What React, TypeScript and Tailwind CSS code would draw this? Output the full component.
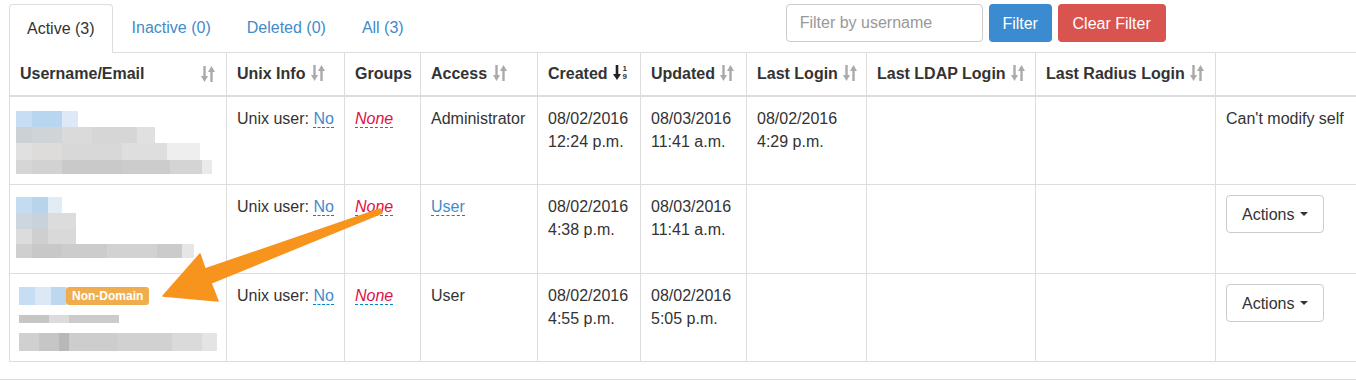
import React from "react";

type Block = { w: number; c: string };

const SortIcon = () => (
  <svg width="16" height="18" viewBox="0 0 16 18" className="inline-block align-[-3px]">
    <path d="M4.5 1v12" stroke="#aaa" strokeWidth="2.4" />
    <path d="M1 11l3.5 6 3.5-6z" fill="#aaa" />
    <path d="M11.5 17v-12" stroke="#aaa" strokeWidth="2.4" />
    <path d="M8 7l3.5-6 3.5 6z" fill="#aaa" />
  </svg>
);

const NumSortIcon = () => (
  <span className="inline-flex items-center align-[-2px] ml-1">
    <svg width="10" height="17" viewBox="0 0 10 17">
      <path d="M5 1v11" stroke="#222" strokeWidth="2.6" />
      <path d="M1 10l4 6 4-6z" fill="#222" />
    </svg>
    <span className="flex flex-col text-[8px] leading-[8px] font-bold ml-px">
      <span>1</span>
      <span>9</span>
    </span>
  </span>
);

const Mosaic = ({ rows }: { rows: { h: number; blocks: Block[] }[] }) => (
  <div className="flex flex-col blur-[0.6px]">
    {rows.map((r, i) => (
      <div key={i} className="flex" style={{ height: r.h }}>
        {r.blocks.map((b, j) => (
          <div key={j} style={{ width: b.w, backgroundColor: b.c }} />
        ))}
      </div>
    ))}
  </div>
);

const Editable = ({ children, red }: { children: React.ReactNode; red?: boolean }) => (
  <span
    className={
      red
        ? "italic text-[#dd1144] border-b border-dashed border-[#0088cc]"
        : "text-[#428bca] border-b border-dashed border-[#0088cc]"
    }
  >
    {children}
  </span>
);

const ActionsButton = () => (
  <button className="h-[38px] px-[15px] border border-[#ccc] rounded bg-white text-[#333] flex items-center gap-[6px]">
    Actions
    <span className="w-0 h-0 border-x-[4px] border-x-transparent border-t-[4px] border-t-[#333]" />
  </button>
);

const row1 = [
  { h: 16, blocks: [{ w: 16, c: "#c6def3" }, { w: 30, c: "#b9d6f0" }, { w: 16, c: "#dde9f6" }] },
  { h: 16, blocks: [{ w: 16, c: "#ccd1d5" }, { w: 30, c: "#cfd4d8" }, { w: 30, c: "#dadada" }, { w: 45, c: "#d6d6d6" }, { w: 18, c: "#e0e0e0" }] },
  { h: 17, blocks: [{ w: 16, c: "#e0e0e0" }, { w: 30, c: "#dedcda" }, { w: 60, c: "#d8d8d8" }, { w: 45, c: "#dedede" }, { w: 33, c: "#eeeeee" }] },
  { h: 14, blocks: [{ w: 16, c: "#d6d6d6" }, { w: 30, c: "#d2d2d2" }, { w: 60, c: "#c9c9c9" }, { w: 48, c: "#cccccc" }, { w: 32, c: "#d4d4d4" }, { w: 10, c: "#eaeaea" }] },
];

const row2 = [
  { h: 16, blocks: [{ w: 16, c: "#c3dcf2" }, { w: 16, c: "#b8d3ec" }, { w: 14, c: "#e2ecf6" }] },
  { h: 16, blocks: [{ w: 16, c: "#cdd6de" }, { w: 16, c: "#c9d2da" }, { w: 28, c: "#dcdcdc" }] },
  { h: 15, blocks: [{ w: 16, c: "#dcdcdc" }, { w: 16, c: "#cfcfcf" }, { w: 28, c: "#d9d9d9" }] },
  { h: 14, blocks: [{ w: 16, c: "#cfcfcf" }, { w: 30, c: "#c8c8c8" }, { w: 45, c: "#cccccc" }, { w: 50, c: "#d2d2d2" }, { w: 25, c: "#cbcbcb" }, { w: 12, c: "#e6e6e6" }] },
];

const row3b = [
  { h: 8, blocks: [{ w: 30, c: "#c6c6c6" }, { w: 20, c: "#dcdcdc" }, { w: 50, c: "#cbcbcb" }] },
];
const row3c = [
  { h: 18, blocks: [{ w: 20, c: "#d0d0d0" }, { w: 20, c: "#c6c6c6" }, { w: 10, c: "#b8b8b8" }, { w: 50, c: "#cdcdcd" }, { w: 55, c: "#d1d1d1" }, { w: 30, c: "#dadada" }, { w: 15, c: "#e4e4e4" }] },
];

const th = "h-[43px] px-[10px] text-left align-middle font-bold border border-[#ddd] border-b-2 whitespace-nowrap";
const td = "px-[10px] pt-[10px] align-top border border-[#ddd] leading-[23px]";

export default function App() {
  return (
    <div className="relative w-[1356px] h-[380px] overflow-hidden bg-white text-[#333] text-[16px] leading-[23px] [font-family:'Liberation_Sans',Arial,sans-serif]">
      <div className="flex items-start pt-[4px] pl-[9px]">
        <div className="flex">
          <div className="px-[17px] py-3 border border-[#ddd] border-b-white rounded-t bg-white -mb-px relative z-10">
            Active (3)
          </div>
          <div className="px-[17px] py-3 ml-[2px] text-[#428bca]">Inactive (0)</div>
          <div className="px-[17px] py-3 ml-[2px] text-[#428bca]">Deleted (0)</div>
          <div className="px-[17px] py-3 ml-[2px] text-[#428bca]">All (3)</div>
        </div>
        <div className="flex ml-[365px] gap-[6px]">
          <input
            placeholder="Filter by username"
            className="w-[197px] h-[38px] px-[13px] border border-[#ccc] rounded placeholder:text-[#999] outline-none"
          />
          <button className="h-[38px] w-[63px] rounded bg-[#3b8bd0] text-white">Filter</button>
          <button className="h-[38px] w-[108px] rounded bg-[#d9534f] text-white">Clear Filter</button>
        </div>
      </div>

      <table className="ml-[9px] table-fixed w-[1366px] border-collapse">
        <colgroup>
          <col className="w-[217px]" />
          <col className="w-[118px]" />
          <col className="w-[76px]" />
          <col className="w-[117px]" />
          <col className="w-[103px]" />
          <col className="w-[106px]" />
          <col className="w-[120px]" />
          <col className="w-[169px]" />
          <col className="w-[180px]" />
          <col className="w-[160px]" />
        </colgroup>
        <thead>
          <tr>
            <th className={th}>
              <div className="flex justify-between items-center">
                <span>Username/Email</span>
                <SortIcon />
              </div>
            </th>
            <th className={th}>Unix Info <SortIcon /></th>
            <th className={th}>Groups</th>
            <th className={th}>Access <SortIcon /></th>
            <th className={th}>Created<NumSortIcon /></th>
            <th className={th}>Updated <SortIcon /></th>
            <th className={th}>Last Login <SortIcon /></th>
            <th className={th}>Last LDAP Login <SortIcon /></th>
            <th className={th}>Last Radius Login <SortIcon /></th>
            <th className={th + " border-r-0"}></th>
          </tr>
        </thead>
        <tbody>
          <tr className="h-[89px]">
            <td className="px-[6px] pt-[14px] align-top border border-[#ddd]">
              <Mosaic rows={row1} />
            </td>
            <td className={td}>Unix user: <Editable>No</Editable></td>
            <td className={td}><Editable red>None</Editable></td>
            <td className={td}>Administrator</td>
            <td className={td}>08/02/2016<br />12:24 p.m.</td>
            <td className={td}>08/03/2016<br />11:41 a.m.</td>
            <td className={td}>08/02/2016<br />4:29 p.m.</td>
            <td className={td}></td>
            <td className={td}></td>
            <td className={td + " border-r-0"}>Can't modify self</td>
          </tr>
          <tr className="h-[89px]">
            <td className="px-[6px] pt-[12px] align-top border border-[#ddd]">
              <Mosaic rows={row2} />
            </td>
            <td className={td}>Unix user: <Editable>No</Editable></td>
            <td className={td}><Editable red>None</Editable></td>
            <td className={td}><Editable>User</Editable></td>
            <td className={td}>08/02/2016<br />4:38 p.m.</td>
            <td className={td}>08/03/2016<br />11:41 a.m.</td>
            <td className={td}></td>
            <td className={td}></td>
            <td className={td}></td>
            <td className={td + " border-r-0"}>
              <ActionsButton />
            </td>
          </tr>
          <tr className="h-[88px]">
            <td className="px-[9px] pt-[13px] align-top border border-[#ddd]">
              <div className="flex items-center">
                <div className="flex blur-[0.6px] h-[18px]">
                  <div className="w-[16px] bg-[#c6def3]" />
                  <div className="w-[16px] bg-[#dce8f5]" />
                  <div className="w-[15px] bg-[#bcd7ef]" />
                </div>
                <span className="h-[18px] px-[6px] rounded-[3px] bg-[#f0ad4e] text-white text-[12px] leading-[18px] font-bold">
                  Non-Domain
                </span>
              </div>
              <div className="mt-[10px]">
                <Mosaic rows={row3b} />
              </div>
              <div className="mt-[10px]">
                <Mosaic rows={row3c} />
              </div>
            </td>
            <td className={td}>Unix user: <Editable>No</Editable></td>
            <td className={td}><Editable red>None</Editable></td>
            <td className={td}>User</td>
            <td className={td}>08/02/2016<br />4:55 p.m.</td>
            <td className={td}>08/02/2016<br />5:05 p.m.</td>
            <td className={td}></td>
            <td className={td}></td>
            <td className={td}></td>
            <td className={td + " border-r-0"}>
              <ActionsButton />
            </td>
          </tr>
        </tbody>
      </table>
      <div className="mt-[17px] border-t border-[#ddd]" />

      <svg
        className="absolute inset-0 pointer-events-none"
        width="1356"
        height="380"
        viewBox="0 0 1356 380"
      >
        <polygon
          points="163,296 200,254 205,269 380,209 382,213 211,283 218,301"
          fill="#f7941d"
          stroke="#f7941d"
          strokeWidth="1.5"
          strokeLinejoin="round"
        />
      </svg>
    </div>
  );
}
